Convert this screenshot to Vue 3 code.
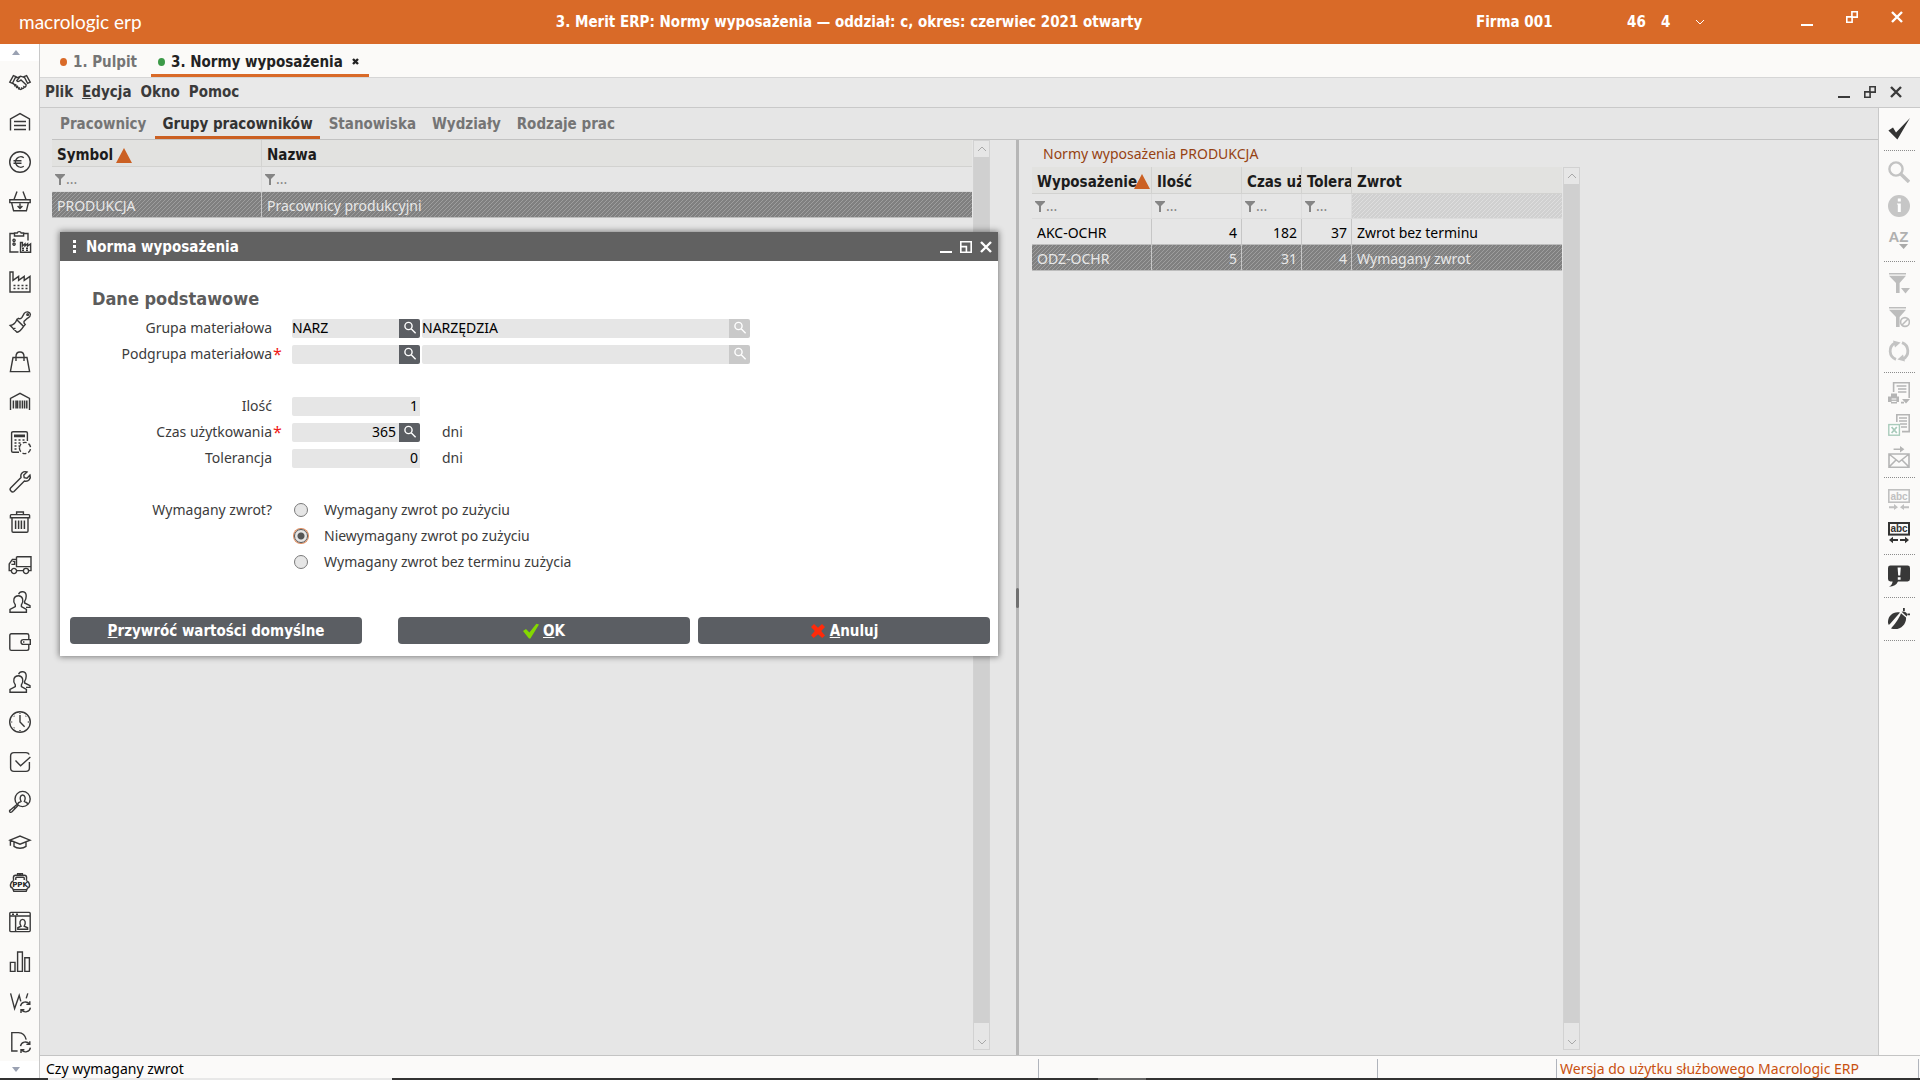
<script setup>
import { ref } from 'vue'

const person = 'M1 21.3V18.4L6.3 15.6V13.8C3.4 10 4.6 4.7 9.3 4.7S15 10 12.4 13.8V15.6L17.4 18.4V21.3Z'
const personBehind = 'M9.6 3.2C11-.4 17.2-.2 17.2 5C17.2 7.5 16.6 9 15.6 10.4V12L21 14.6V16.4H17'
const refreshSmall = 'M11.5 15.2A5 5 0 0 1 20.4 13M20.8 10.2V13.4H17.4M21.4 16.6A5 5 0 0 1 12.6 19M12 22V18.8H15.4'

const modules = [
  { name: 'Kontrahenci', d: 'M.8 11.2 4.4 4.6 6.9 5.6 3.4 12.4ZM21.2 11.2 17.6 4.6 15.1 5.6 18.6 12.4ZM6.6 6.6 9.6 6.2 11.5 5.2 15.2 6.4M11.4 5.4 7.8 9.6C8.6 11 10.4 10.6 12 9L17.4 14M4 12.4 11 18.2C12 18.8 12.8 18 12.8 17.2 14 18 15.4 17 15 15.8 16.2 16.4 17.4 15.4 17 14M5.4 15.4 7.2 13.2M7.2 17 9 14.8M9.2 18.4 10.8 16.4' },
  { name: 'Magazyn', d: 'M1.5 19.5V8L11 2.6 20.5 8V19.5M5 10.5H17M5 14.5H17M5 18.5H17' },
  { name: 'Finanse', d: 'M.7 11a10.3 10.3 0 1 0 20.6 0a10.3 10.3 0 1 0-20.6 0M14.8 6.8A5.2 5.2 0 1 0 14.8 15.2M4.5 9.7H12.5M4.5 12.3H12.5' },
  { name: 'Zakupy', d: 'M.8 8.8H21.2V11.6H.8ZM2.6 11.6 4.6 19.8H17.4L19.4 11.6M5 8.5 8 .5M17 8.5 14 .5M11 12.5V17.4M8.6 15 11 17.4 13.4 15' },
  { name: 'Planowanie', d: 'M5 2.5H1V21H9.5M15 2.5H19V9.5M5.5 2H8.2C8.6.2 11.8.2 12.2 2H14.6V5H5.5ZM5 8.2a1.1 1.1 0 1 0 .1 0M5 12a1.1 1.1 0 1 0 .1 0M11.5 21.3V11.5H13.4V15L16 12.8V15L18.6 12.8V15L21.6 12.8V21.3Z', dots: 'M13 17.2H21M13 19.2H21' },
  { name: 'Produkcja', d: 'M1 21V1H4V9.4L9.6 5.4V9.4L15.2 5.4V9.4L21 5.4V21Z', dots: 'M4.5 14.5H19M4.5 17.5H19' },
  { name: 'Czyszczenie', d: 'M1.2 14.5C4.5 14 6.8 11.5 7.8 8.8L14.6 15.4C12.6 18.5 10.5 21 8 21.3ZM7.8 8.8 9.4 7.4C11 8 12 7.8 13 6.4L15.2 2.4C17 .2 21 .4 21.4 3.4 21.6 6 19.6 6.6 17.8 7.8L15 10.4C14.6 11.6 15.2 12.6 16.2 13.6L14.6 15.4M18.6 2.8a.8.8 0 1 0 .1 0M4 18.6 6.4 17' },
  { name: 'Sprzedaż', d: 'M4 6.5H18L20.6 20.6H1.4ZM7 10V5.6C7-.6 15-.6 15 5.6V10' },
  { name: 'Kody kreskowe', d: 'M1.5 19V7.4L11 2.4 20.5 7.4V19', bars: 'M4.4 9.4V17.6M7 9.4V17.6M8.6 9.4V17.6M11 9.4V17.6M13.4 9.4V17.6M15.6 9.4V17.6M17.8 9.4V17.6' },
  { name: 'Rozliczenia', d: 'M10 21.2H4Q2.6 21.2 2.6 20V2Q2.6.8 4 .8H17Q18.4.8 18.4 2V10', bars: 'M5 4.2H16M5 5.4H16', dots: 'M5.5 9H16M5.5 12H12M5.5 15H10M5.5 18H9', dashed: 'M10.4 17a5.6 5.6 0 1 0 11.2 0a5.6 5.6 0 1 0-11.2 0' },
  { name: 'Serwis', d: 'M21 4 18 7.2 15.2 6.6 14.8 4 18 1C14.4-.4 10.9 2.6 12 6.6L1.6 17C0 18.7 3 22.2 5 20.4L15.4 10C19.5 11 22.3 7.6 21 4Z' },
  { name: 'Likwidacja', d: 'M2.2 3.6H19.8Q20.6 3.6 20.6 4.4V6.8H1.4V4.4Q1.4 3.6 2.2 3.6ZM7.6 3.4V1H14.4V3.4M3 6.8V20Q3 21.2 4.2 21.2H17.8Q19 21.2 19 20V6.8', bars: 'M6.6 9.6V18M9.6 9.6V18M12.4 9.6V18M15.4 9.6V18' },
  { name: 'Transport', d: 'M7.5 5.8H22V19.6H19.4M7.5 5.8V15.6H22M7.5 8.4H3.4L.2 13V19.6H2.2M7.6 19.6H14.4M3.6 10.4H5.6V13.4H2.4M2.4 20a2.6 2.6 0 1 0 5.2 0a2.6 2.6 0 1 0-5.2 0M14.4 20a2.6 2.6 0 1 0 5.2 0a2.6 2.6 0 1 0-5.2 0' },
  { name: 'Kadry', d: person + personBehind },
  { name: 'Portfel', d: 'M19.8 8V4.4Q19.8 2.8 18 2.8H2.4Q.8 2.8.8 4.4V17.8Q.8 19.4 2.4 19.4H18Q19.8 19.4 19.8 17.6V14M21.3 8.6H14.4a2.3 2.3 0 0 0 0 4.8H21.3ZM14 11H15.4' },
  { name: 'Płace', d: person + personBehind },
  { name: 'Czas pracy', d: 'M.7 11a10.3 10.3 0 1 0 20.6 0a10.3 10.3 0 1 0-20.6 0M11 4V11L15.6 15.8M11 2.2V3M11 19V20M2.4 11H3.2M18.8 11H19.8M4.9 4.9 5.4 5.4M17.1 4.9 16.6 5.4M4.9 17.1 5.4 16.6' },
  { name: 'Zadania', d: 'M20.4 11V17Q20.4 20.4 17 20.4H5Q1.6 20.4 1.6 17V5Q1.6 1.6 5 1.6H17Q19.4 1.6 20.2 3.6M6.5 9.6 11.6 14.8 21.4 6' },
  { name: 'Rekrutacja', d: 'M6 8a7.6 7.6 0 1 0 15.2 0a7.6 7.6 0 1 0-15.2 0M8.8 13.4 9.4 11.8 12 10.4C10.4 7.6 11.2 4 13.6 4S17 7.6 15.4 10.4L18 11.8 18.6 13.4M8 13.4 9 14.4 3 20.8Q1.6 22 .8 20.8T1.4 19ZM5 16.6 6 17.8' },
  { name: 'Szkolenia', d: 'M1 9.2 11 5 21 9.2 11 13.2ZM5 11.2V15.4C8 17.8 14 17.8 17 15.4V11.2M1.4 9.6V14.8' },
  { name: 'PPK', d: 'M4.6 9.6 4.4 6.6Q4.4 4.2 6.6 4.2H15.4Q17.6 4.2 17.6 6.6L17.4 9.6M6.8 9V7Q6.8 6.2 7.6 6.2H14.4Q15.2 6.2 15.2 7V9M8.6 4V2.6H10.6V4M11.4 4V2.6H13.4V4M4.6 9.6C1 11.2.2 16 3.6 17.2L4.8 20.4H17.2L18.4 17.2C21.8 16 21 11.2 17.4 9.6M4.8 18.6H17.2', label: 'PPK' },
  { name: 'Portal pracownika', d: 'M1.8 1.4H20.2Q21.2 1.4 21.2 2.4V19.6Q21.2 20.6 20.2 20.6H1.8Q.8 20.6.8 19.6V2.4Q.8 1.4 1.8 1.4ZM.8 5H21.2M6.6 5V20.6M8.8 18.2V16.8L12 15.2C10 12.2 11 8.4 13.6 8.4S17.2 12.2 15.2 15.2L18.6 16.8V18.2Z', dots: 'M3 3.2H9' },
  { name: 'Analizy', d: 'M1.4 11.4H6V20.4H1.4ZM8.6 1H13.4V20.4H8.6ZM15.8 6.8H20.4V20.4H15.8Z' },
  { name: 'Aktualizacja W', d: 'M1.6 2.4 5.6 17.6 10.2 4.4 11.8 10.4M18.8 2.4 17.2 7.4' + refreshSmall },
  { name: 'Aktualizacja D', d: 'M8.6 20H2.8V1.6H9.4C14.6 1.8 16.4 5 17.2 8.6' + refreshSmall }
]

const tools = [
  { items: ['check'] },
  { items: ['search', 'info', 'sort'] },
  { items: ['filter', 'filter-off', 'refresh'] },
  { items: ['print', 'excel', 'mail'], tight: true },
  { items: ['narrow', 'widen'] },
  { items: ['alert'] },
  { items: ['bug'] }
]

const menu = ['Plik', 'Edycja', 'Okno', 'Pomoc']
const views = ['Pracownicy', 'Grupy pracowników', 'Stanowiska', 'Wydziały', 'Rodzaje prac']
const activeView = ref('Grupy pracowników')

const norms = [
  { symbol: 'AKC-OCHR', qty: 4, time: 182, tolerance: 37, back: 'Zwrot bez terminu' },
  { symbol: 'ODZ-OCHR', qty: 5, time: 31, tolerance: 4, back: 'Wymagany zwrot', selected: true }
]

const returnOptions = ['Wymagany zwrot po zużyciu', 'Niewymagany zwrot po zużyciu', 'Wymagany zwrot bez terminu zużycia']
const returnMode = ref(returnOptions[1])
const group = ref('NARZ')
const groupName = ref('NARZĘDZIA')
const subgroup = ref('')
const subgroupName = ref('')
const quantity = ref('1')
const usage = ref('365')
const tolerance = ref('0')
</script>

<template>
  <div class="app">
    <header class="topbar">
      <span class="brand">macrologic erp</span>
      <h1 class="title">3. Merit ERP: Normy wyposażenia — oddział: c, okres: czerwiec 2021 otwarty</h1>
      <div class="account">
        <span class="company">Firma 001</span>
        <span class="count">46</span>
        <span class="count">4</span>
        <button class="plain" aria-label="Rozwiń"><svg width="10" height="6" viewBox="0 0 10 6" class="line"><path d="M1 1 5 5 9 1" /></svg></button>
      </div>
      <div class="win-buttons">
        <button class="plain low" aria-label="Minimalizuj"><svg width="12" height="12" viewBox="0 0 12 12"><path d="M0 10h12v2H0z" fill="currentColor" /></svg></button>
        <button class="plain" aria-label="Przywróć"><svg width="12" height="12" viewBox="0 0 12 12" class="line bold"><path d="M5.9.8H11.2V6.1H5.9ZM.8 5.9H6.1V11.2H.8Z" /></svg></button>
        <button class="plain" aria-label="Zamknij"><svg width="12" height="12" viewBox="0 0 12 12" class="line heavy"><path d="M1 1 11 11M11 1 1 11" /></svg></button>
      </div>
    </header>

    <div class="body">
      <nav class="modules" aria-label="Moduły">
        <button class="plain scroll-step" aria-label="W górę"><svg width="8" height="5" viewBox="0 0 8 5"><path d="M4 0 8 5H0Z" fill="#9aa1b2" /></svg></button>
        <button v-for="m in modules" :key="m.name" class="plain module" :aria-label="m.name">
          <svg width="24" height="22" viewBox="-1 0 24 22" class="mod-icon">
            <path :d="m.d" />
            <path v-if="m.bars" :d="m.bars" class="bars" />
            <path v-if="m.dots" :d="m.dots" class="dots" />
            <path v-if="m.dashed" :d="m.dashed" class="dashed" />
            <text v-if="m.label" x="11" y="16.4" text-anchor="middle" class="mod-label">{{ m.label }}</text>
          </svg>
        </button>
        <button class="plain scroll-step" aria-label="W dół"><svg width="8" height="5" viewBox="0 0 8 5"><path d="M0 0H8L4 5Z" fill="#9aa1b2" /></svg></button>
      </nav>

      <main class="main">
        <div class="doc-tabs">
          <button class="plain doc-tab"><i class="dot orange"></i>1. Pulpit</button>
          <button class="plain doc-tab active"><i class="dot green"></i>3. Normy wyposażenia
            <svg width="7" height="7" viewBox="0 0 7 7" class="line heavy tab-close"><path d="M1 1 6 6M6 1 1 6" /></svg>
          </button>
        </div>

        <div class="menubar">
          <button v-for="item in menu" :key="item" class="plain menu-item"><template v-if="item === 'Edycja'"><u>E</u>dycja</template><template v-else>{{ item }}</template></button>
          <div class="win-buttons dark">
            <button class="plain" aria-label="Minimalizuj okno"><svg width="12" height="12" viewBox="0 0 12 12"><path d="M0 10h12v2H0z" fill="currentColor" /></svg></button>
            <button class="plain" aria-label="Przywróć okno"><svg width="12" height="12" viewBox="0 0 12 12" class="line bold"><path d="M5.9.8H11.2V6.1H5.9ZM.8 5.9H6.1V11.2H.8Z" /></svg></button>
            <button class="plain" aria-label="Zamknij okno"><svg width="12" height="12" viewBox="0 0 12 12" class="line heavy"><path d="M1 1 11 11M11 1 1 11" /></svg></button>
          </div>
        </div>

        <div class="work">
          <div class="content">
            <div class="views">
              <button v-for="v in views" :key="v" class="plain view" :class="{ active: v === activeView }" @click="activeView = v">{{ v }}</button>
            </div>

            <div class="panes">
              <section class="pane left">
                <table class="grid groups">
                  <colgroup><col class="c-symbol" /><col /></colgroup>
                  <thead>
                    <tr>
                      <th>Symbol<svg width="16" height="15" viewBox="0 0 16 15" class="sort-mark"><path d="M8 0 16 15H0Z" fill="#cb6023" /></svg></th>
                      <th>Nazwa</th>
                    </tr>
                    <tr class="filters">
                      <td v-for="n in 2" :key="n"><button class="plain filter" aria-label="Filtruj"><svg width="10" height="11" viewBox="0 0 10 11"><path d="M0 0H10V1L6 5V11H4V5L0 1Z" fill="#858585" /></svg>...</button></td>
                    </tr>
                  </thead>
                  <tbody>
                    <tr class="selected"><td>PRODUKCJA</td><td>Pracownicy produkcyjni</td></tr>
                  </tbody>
                </table>
                <div class="scrollbar">
                  <button class="plain up" aria-label="Przewiń w górę"><svg width="10" height="6" viewBox="0 0 10 6" class="line"><path d="M1 5 5 1 9 5" /></svg></button>
                  <div class="thumb"></div>
                  <button class="plain down" aria-label="Przewiń w dół"><svg width="10" height="6" viewBox="0 0 10 6" class="line"><path d="M1 1 5 5 9 1" /></svg></button>
                </div>
              </section>

              <div class="splitter"><span class="grip"></span></div>

              <section class="pane right">
                <h2 class="caption">Normy wyposażenia PRODUKCJA</h2>
                <div class="grid-wrap">
                  <table class="grid norms">
                    <colgroup><col class="c-item" /><col class="c-qty" /><col class="c-time" /><col class="c-tol" /><col /></colgroup>
                    <thead>
                      <tr>
                        <th>Wyposażenie<svg width="16" height="15" viewBox="0 0 16 15" class="sort-mark over"><path d="M8 0 16 15H0Z" fill="#cb6023" /></svg></th>
                        <th>Ilość</th><th>Czas uż</th><th>Tolera</th><th>Zwrot</th>
                      </tr>
                      <tr class="filters">
                        <td v-for="n in 4" :key="n"><button class="plain filter" aria-label="Filtruj"><svg width="10" height="11" viewBox="0 0 10 11"><path d="M0 0H10V1L6 5V11H4V5L0 1Z" fill="#858585" /></svg>...</button></td>
                        <td class="hatched"></td>
                      </tr>
                    </thead>
                    <tbody>
                      <tr v-for="r in norms" :key="r.symbol" :class="{ selected: r.selected }">
                        <td>{{ r.symbol }}</td>
                        <td class="num">{{ r.qty }}</td>
                        <td class="num">{{ r.time }}</td>
                        <td class="num">{{ r.tolerance }}</td>
                        <td>{{ r.back }}</td>
                      </tr>
                    </tbody>
                  </table>
                  <div class="scrollbar">
                    <button class="plain up" aria-label="Przewiń w górę"><svg width="10" height="6" viewBox="0 0 10 6" class="line"><path d="M1 5 5 1 9 5" /></svg></button>
                    <div class="thumb"></div>
                    <button class="plain down" aria-label="Przewiń w dół"><svg width="10" height="6" viewBox="0 0 10 6" class="line"><path d="M1 1 5 5 9 1" /></svg></button>
                  </div>
                </div>
              </section>
            </div>

            <form class="dialog" role="dialog" aria-labelledby="dialog-title" @submit.prevent>
              <div class="dialog-bar">
                <svg width="3" height="13" viewBox="0 0 3 13"><path d="M0 0h3v3H0zM0 5h3v3H0zM0 10h3v3H0z" fill="#fff" /></svg>
                <h2 id="dialog-title">Norma wyposażenia</h2>
                <div class="dialog-tools">
                  <button type="button" class="plain" aria-label="Zwiń"><svg width="12" height="12" viewBox="0 0 12 12"><path d="M0 10h12v2H0z" fill="currentColor" /></svg></button>
                  <button type="button" class="plain" aria-label="Powiększ"><svg width="12" height="12" viewBox="0 0 12 12" class="line bold"><path d="M.8.8H11.2V11.2H.8ZM1 5.6H6.4V11" /></svg></button>
                  <button type="button" class="plain" aria-label="Zamknij dialog"><svg width="12" height="12" viewBox="0 0 12 12" class="line heavy"><path d="M1 1 11 11M11 1 1 11" /></svg></button>
                </div>
              </div>

              <div class="dialog-body">
                <h3>Dane podstawowe</h3>

                <div class="field">
                  <label for="group">Grupa materiałowa</label><span class="req"></span>
                  <input id="group" v-model="group" class="code" /><button type="button" class="plain lookup" aria-label="Wybierz grupę"><svg width="14" height="14" viewBox="0 0 14 14"><circle cx="5.5" cy="5" r="3.6" /><path d="M8.2 7.8 12.6 12.2" /></svg></button>
                  <input v-model="groupName" class="name" aria-label="Nazwa grupy" readonly /><button type="button" class="plain lookup off" disabled aria-label="Wybierz nazwę grupy"><svg width="14" height="14" viewBox="0 0 14 14"><circle cx="5.5" cy="5" r="3.6" /><path d="M8.2 7.8 12.6 12.2" /></svg></button>
                </div>
                <div class="field">
                  <label for="subgroup">Podgrupa materiałowa</label><span class="req">*</span>
                  <input id="subgroup" v-model="subgroup" class="code" /><button type="button" class="plain lookup" aria-label="Wybierz podgrupę"><svg width="14" height="14" viewBox="0 0 14 14"><circle cx="5.5" cy="5" r="3.6" /><path d="M8.2 7.8 12.6 12.2" /></svg></button>
                  <input v-model="subgroupName" class="name" aria-label="Nazwa podgrupy" readonly /><button type="button" class="plain lookup off" disabled aria-label="Wybierz nazwę podgrupy"><svg width="14" height="14" viewBox="0 0 14 14"><circle cx="5.5" cy="5" r="3.6" /><path d="M8.2 7.8 12.6 12.2" /></svg></button>
                </div>

                <div class="field spaced">
                  <label for="quantity">Ilość</label><span class="req"></span>
                  <input id="quantity" v-model="quantity" class="number" />
                </div>
                <div class="field">
                  <label for="usage">Czas użytkowania</label><span class="req">*</span>
                  <input id="usage" v-model="usage" class="code number-code" /><button type="button" class="plain lookup" aria-label="Wybierz czas"><svg width="14" height="14" viewBox="0 0 14 14"><circle cx="5.5" cy="5" r="3.6" /><path d="M8.2 7.8 12.6 12.2" /></svg></button>
                  <span class="unit">dni</span>
                </div>
                <div class="field">
                  <label for="tolerance">Tolerancja</label><span class="req"></span>
                  <input id="tolerance" v-model="tolerance" class="number" />
                  <span class="unit">dni</span>
                </div>

                <div class="field choices spaced" role="radiogroup" aria-labelledby="return-label">
                  <span id="return-label" class="label">Wymagany zwrot?</span><span class="req"></span>
                  <div class="options">
                    <label v-for="o in returnOptions" :key="o" class="option">
                      <input v-model="returnMode" type="radio" name="return" :value="o" />{{ o }}
                    </label>
                  </div>
                </div>
              </div>

              <div class="dialog-actions">
                <button type="button" class="action reset"><span><u>P</u>rzywróć wartości domyślne</span></button>
                <button type="submit" class="action"><svg width="16" height="16" viewBox="0 0 16 16"><path d="M0 8 3 6 6.4 9.4 13.4.8 16 1.4 7.4 15.4 6 15.4Z" fill="#84d800" /></svg><span><u>O</u>K</span></button>
                <button type="button" class="action"><svg width="16" height="16" viewBox="0 0 16 16"><path d="M1 4 4 1 8 4.8 12 1 15 4 11.2 8 15 12.4 12.2 15 8 11.2 3.6 15 1 12.2 4.8 8Z" fill="#ff2a0a" /></svg><span><u>A</u>nuluj</span></button>
              </div>
            </form>
          </div>

          <aside class="toolbar" aria-label="Narzędzia">
            <div v-for="(g, i) in tools" :key="i" class="tool-group" :class="{ tight: g.tight }">
              <button v-for="t in g.items" :key="t" class="plain tool" :aria-label="t">
                <svg width="22" height="22" viewBox="0 0 22 22">
                  <path v-if="t === 'check'" d="M.4 12.6 5 9.6 8 14.4 22 0 9.4 21.4Z" fill="#333" />
                  <g v-else-if="t === 'search'" fill="none" stroke="#c3c3c3"><circle cx="8" cy="8" r="6.6" stroke-width="2.4" /><path d="M12.8 13 21 21" stroke-width="3.4" /></g>
                  <g v-else-if="t === 'info'"><circle cx="11" cy="11" r="11" fill="#c6c6c6" /><path d="M9.8 3.6h3v2.8h-3zM9 8.4h3.8V17H9.8V9.6H9z" fill="#fff" /></g>
                  <g v-else-if="t === 'sort'"><text x="10.5" y="13" text-anchor="middle" class="glyph az">AZ</text><path d="M11 15H20L15.6 20Z" fill="#aaa" /></g>
                  <g v-else-if="t === 'filter'" fill="#bdbdbd"><path d="M1 1H18V2.4H1ZM1 3.8H18L11.6 11V21H8V11ZM13 16H22L17.5 21.4Z" /></g>
                  <g v-else-if="t === 'filter-off'"><path d="M1 1H18V2.4H1ZM1 3.8H18L11.6 11V21H8V11Z" fill="#bdbdbd" /><circle cx="17" cy="16" r="4.4" fill="#fbfaf9" stroke="#bdbdbd" stroke-width="1.6" /><path d="M14 19 20 13" stroke="#bdbdbd" stroke-width="1.6" /></g>
                  <g v-else-if="t === 'refresh'"><path d="M8 19.4A9 9 0 0 1 7 3M14 2.6A9 9 0 0 1 15 19" fill="none" stroke="#c3c3c3" stroke-width="2.8" /><path d="M5 .6 12.6 2.6 7 7.6ZM17 21.4 9.4 19.4 15 14.4Z" fill="#c3c3c3" /></g>
                  <g v-else-if="t === 'print'"><path d="M5.6 10V.8H21.2V16M8.6 4H18.4M10 7H18.4M10 10H18.4M13 20.6H16" fill="none" stroke="#b5b5b5" stroke-width="1.6" /><path d="M3 11.4H9V14.4H11V20H9V21.6H3V20H0V14.4H3ZM14 17H22L18 21.4Z" fill="#b5b5b5" /><path d="M3.6 17H8.4M3.6 19.4H8.4" stroke="#fff" /></g>
                  <g v-else-if="t === 'excel'"><path d="M8.8 8V.8H21.2V17.6H14M11 4H19M11 7H19M12 10H19M13 13H19" fill="none" stroke="#b5b5b5" stroke-width="1.6" /><rect x=".8" y="10.6" width="10.6" height="10.6" fill="#fff" stroke="#a9cbbb" stroke-width="1.4" /><path d="M3.6 13 8.8 19M8.8 13 3.6 19" stroke="#a9cbbb" stroke-width="1.8" /></g>
                  <g v-else-if="t === 'mail'" fill="none" stroke="#b5b5b5" stroke-width="1.6"><path d="M1 8H21V21.2H1ZM1 8 11 16 21 8M1 21 8 14M21 21 14 14M5.6 3.2H13" /><path d="M12 0 16.4 3.2 12 6.4Z" fill="#b5b5b5" stroke="none" /></g>
                  <g v-else-if="t === 'narrow'"><rect x=".8" y="1.8" width="20.4" height="12.4" fill="none" stroke="#c0c0c0" stroke-width="1.6" /><text x="11" y="11.6" text-anchor="middle" class="glyph abc" fill="#c0c0c0">abc</text><path d="M1 18.2H6V16L10 19.2 6 22V20.2H1ZM21 18.2H16V16L12 19.2 16 22V20.2H21Z" fill="#c0c0c0" /></g>
                  <g v-else-if="t === 'widen'"><rect x="1" y="1" width="20" height="11.6" fill="none" stroke="#333" stroke-width="2" /><text x="11" y="10.4" text-anchor="middle" class="glyph abc" fill="#333">abc</text><path d="M10 17H5V14.8L1 18 5 21.2V19H10ZM12 17H17V14.8L21 18 17 21.2V19H12Z" fill="#333" /></g>
                  <g v-else-if="t === 'alert'"><path d="M2.4.6H19.6Q22 .6 22 3V14Q22 16.4 19.6 16.4H10Q8 21 1 21.8 4.4 19.8 4.6 16.4H2.4Q0 16.4 0 14V3Q0 .6 2.4.6Z" fill="#383838" /><path d="M9.6 2.6H12.8L12.2 10.6H10.2ZM9.8 12.2H12.6V14.8H9.8Z" fill="#fff" /></g>
                  <g v-else fill="#383838"><path d="M0 15C-.4 8 5 3 12 4.4L2.4 15.6.8 17ZM3 20.4C6 17 11 11 13 5.2L18 9.4C18.8 16 12 23.4 3 20.4ZM13.6 3.8Q16 2.8 18 4.6T18.6 8.4ZM15 0H16.8V3H15ZM19.4 5.6H22V7.2H19.4Z" /></g>
                </svg>
              </button>
            </div>
          </aside>
        </div>

        <footer class="status">
          <span class="cell hint">Czy wymagany zwrot</span>
          <span class="cell mid"></span>
          <span class="cell short"></span>
          <span class="cell license">Wersja do użytku służbowego Macrologic ERP</span>
        </footer>
      </main>
    </div>
    <div class="taskbar-edge"></div>
  </div>
</template>

<style>
body {
  margin: 0;
}
</style>

<style scoped>
.app {
  display: flex;
  flex-direction: column;
  min-height: 100vh;
  background: #e6e6e6;
  color: #000;
  font: 14px/20px "Noto Sans", sans-serif;
}
.app *,
.app *::before {
  box-sizing: border-box;
}
svg {
  display: block;
  flex: none;
}
h1, h2, h3 {
  margin: 0;
  font-size: inherit;
}
.plain {
  display: flex;
  align-items: center;
  margin: 0;
  padding: 0;
  border: 0;
  background: none;
  color: inherit;
  font: inherit;
  white-space: nowrap;
}
.line {
  fill: none;
  stroke: currentColor;
  stroke-width: 1;
}
.line.bold {
  stroke-width: 1.6;
}
.line.heavy {
  stroke-width: 2.4;
}
.topbar,
.doc-tab,
.menubar,
.view,
.grid th,
.dialog-bar,
.action {
  font: bold 15px/20px "DejaVu Sans Condensed", "Noto Sans", sans-serif;
}

/* Top bar */
.topbar {
  display: grid;
  grid-template-columns: 19px 421px 1fr 305px 122px;
  align-items: center;
  height: 44px;
  padding-right: 17px;
  background: #d96a28;
  color: #fff;
}
.brand {
  grid-column: 2;
  font: 19px/20px Lato, sans-serif;
}
.title {
  padding-right: 218px;
  text-align: center;
  white-space: nowrap;
}
.account {
  display: flex;
  align-items: center;
}
.company {
  width: 151px;
}
.count {
  width: 34px;
}
.win-buttons {
  display: flex;
  justify-content: space-between;
  width: 102px;
  justify-self: end;
  padding-bottom: 10px;
}
.win-buttons .low {
  padding-top: 5px;
}

/* Module strip */
.body {
  display: flex;
  flex: 1;
}
.modules {
  display: flex;
  flex-direction: column;
  flex: 0 0 40px;
  border-right: 1px solid #c8c8c8;
  background: #fbfaf8;
}
.scroll-step {
  justify-content: center;
  height: 17px;
  padding-right: 8px;
  background: #fff;
}
.module {
  justify-content: center;
  height: 40px;
  padding-top: 2px;
}
.mod-icon {
  fill: none;
  stroke: #383838;
  stroke-width: 1.4;
  overflow: visible;
}
.mod-icon .bars {
  stroke-width: 1.5;
}
.mod-icon .dots {
  stroke-dasharray: 2 2;
}
.mod-icon .dashed {
  fill: #fbfaf8;
  stroke-dasharray: 4 2;
}
.mod-label {
  fill: #222;
  stroke: none;
  font: bold 7px "DejaVu Sans", sans-serif;
}

/* Document tabs and menu */
.main {
  display: flex;
  flex-direction: column;
  flex: 1;
  min-width: 0;
}
.doc-tabs {
  display: flex;
  gap: 7px;
  height: 34px;
  padding-left: 13px;
  border-bottom: 1px solid #d6d6d6;
  background: #fbfaf8;
}
.doc-tab {
  gap: 6px;
  padding: 5px 7px 0;
  border-bottom: 3px solid transparent;
  color: #757575;
}
.doc-tab.active {
  padding-right: 10px;
  border-color: #d96a28;
  color: #222;
}
.tab-close {
  margin-left: 3px;
}
.dot {
  width: 7px;
  height: 8px;
  border-radius: 50%;
}
.orange {
  background: #d96a28;
}
.green {
  background: #3c9a48;
}
.menubar {
  display: flex;
  align-items: center;
  gap: 9px;
  height: 30px;
  padding: 0 18px 2px 5px;
  border-bottom: 1px solid #c9c9c9;
  background: #e9e9e9;
  color: #3a3a3a;
}
.win-buttons.dark {
  width: 64px;
  margin-left: auto;
  padding: 0;
}

/* Work area */
.work {
  display: flex;
  flex: 1;
}
.content {
  position: relative;
  display: flex;
  flex-direction: column;
  flex: 1;
  min-width: 0;
}
.views {
  display: flex;
  gap: 2px;
  height: 32px;
  margin-left: 12px;
  padding-left: 1px;
  border-bottom: 1px solid #c2c2c2;
}
.view {
  padding: 4px 7px 0;
  border-bottom: 3px solid transparent;
  color: #757575;
}
.view.active {
  border-color: #cb6023;
  color: #333;
}
.panes {
  display: grid;
  grid-template-columns: 976fr 3px 859fr;
  flex: 1;
}
.pane.left {
  display: flex;
  gap: 1px;
  padding: 0 26px 5px 12px;
}
.pane.right {
  display: flex;
  flex-direction: column;
  padding: 4px 13px 5px;
}
.splitter {
  position: relative;
  background: #b6b6b6;
}
.grip {
  position: absolute;
  top: 49%;
  left: 0;
  width: 3px;
  height: 20px;
  border-radius: 2px;
  background: #707070;
}
.caption {
  height: 23px;
  padding-left: 11px;
  color: #964212;
  font-weight: normal;
}
.grid-wrap {
  display: flex;
  flex: 1;
  gap: 1px;
}
.grid {
  align-self: flex-start;
  table-layout: fixed;
  border-collapse: separate;
  border-spacing: 0;
}
.grid.groups {
  flex: 1;
  width: 100%;
}
.grid.norms {
  width: 530px;
}
.c-symbol { width: 210px; }
.c-item { width: 120px; }
.c-qty { width: 90px; }
.c-time { width: 60px; }
.c-tol { width: 50px; }
.grid th,
.grid td {
  position: relative;
  height: 26px;
  padding: 2px 4px 0 5px;
  overflow: hidden;
  border-right: 1px solid #c6c6c6;
  border-bottom: 1px solid #bdbdbd;
  text-align: left;
  white-space: nowrap;
}
.grid th {
  height: 27px;
  padding: 4px 0 0 5px;
  border-color: #d2d2d0;
  background: #e2e2e0;
  color: #1c1c1c;
}
.grid th:last-child,
.grid td:last-child {
  border-right: 0;
}
.grid .filters td {
  height: 25px;
  padding: 0 3px;
  border-color: #dcdcdc;
}
.grid .num {
  padding-left: 0;
  text-align: right;
}
.filter {
  gap: 1px;
  height: 18px;
  color: #858585;
}
.sort-mark {
  display: inline-block;
  margin-left: 3px;
  vertical-align: -3px;
}
.sort-mark.over {
  position: absolute;
  top: 7px;
  right: 1px;
}
.hatched {
  background: linear-gradient(135deg, #dedede 19%, #d0d0d0 19% 56%, #dedede 56% 69%, #d0d0d0 69%) 0 0 / 4px 4px;
}
.selected td {
  background: linear-gradient(135deg, #9e9e9e 19%, #808080 19% 56%, #9e9e9e 56% 69%, #808080 69%) 0 0 / 4px 4px;
  color: #e8e8e8;
}
.scrollbar {
  display: flex;
  flex-direction: column;
  flex: 0 0 17px;
  border: 1px solid #d2d2d2;
  color: #a8a8a8;
}
.scrollbar .plain {
  justify-content: center;
}
.scrollbar .up {
  height: 16px;
}
.scrollbar .down {
  height: 26px;
  padding-top: 12px;
}
.thumb {
  flex: 1;
  background: #d0d0d0;
}

/* Dialog */
.dialog {
  position: absolute;
  top: 124px;
  left: 20px;
  width: 938px;
  background: #fff;
  box-shadow: 0 0 6px 1px rgba(0, 0, 0, .45);
  color: #3c3c3c;
}
.dialog-bar {
  display: flex;
  align-items: center;
  gap: 10px;
  height: 29px;
  padding: 0 6px 0 13px;
  background: #616161;
  color: #fff;
}
.dialog-tools {
  display: flex;
  gap: 8px;
  margin-left: auto;
}
.dialog-body {
  padding: 26px 33px 38px 32px;
}
.dialog-body h3 {
  height: 28px;
  color: #5c5c5c;
  font: bold 18px/24px "DejaVu Sans Condensed", "Noto Sans", sans-serif;
}
.field {
  display: flex;
  align-items: center;
  height: 26px;
}
.field > label,
.field > .label {
  flex: 0 0 180px;
  text-align: right;
}
.field.spaced {
  margin-top: 26px;
}
.req {
  flex: 0 0 20px;
  padding-left: 1px;
  color: #f01818;
  font-size: 16px;
}
.field input:not([type="radio"]) {
  height: 19px;
  margin: 0;
  padding: 0;
  border: 0;
  border-radius: 2px 0 0 2px;
  outline: 0;
  background: #e6e6e6;
  color: #000;
  font: inherit;
}
.field .code {
  width: 107px;
}
.field .name {
  width: 307px;
  margin-left: 2px !important;
}
.field .number {
  width: 128px;
  padding-right: 2px !important;
  text-align: right;
}
.field .number-code {
  padding-right: 3px !important;
  text-align: right;
}
.lookup {
  justify-content: center;
  width: 21px;
  height: 19px;
  border-radius: 0 2px 2px 0;
  background: #5b5e63;
}
.lookup.off {
  background: #c9c9c9;
}
.lookup svg {
  fill: none;
  stroke: #fff;
  stroke-width: 1.4;
}
.unit {
  padding-left: 22px;
}
.field.choices {
  align-items: flex-start;
  height: 78px;
  line-height: 26px;
}
.option {
  display: flex;
  align-items: center;
  gap: 16px;
  height: 26px;
}
.option input {
  appearance: none;
  width: 14px;
  height: 14px;
  margin: 0 0 0 2px;
  border: 1px solid #7a7a7a;
  border-radius: 50%;
  background: #e6e6e6;
}
.option input:checked {
  border-color: #555;
  background: radial-gradient(circle, #555 0 3px, #e6e6e6 4px);
  box-shadow: 0 0 0 1px #dd8a5c;
}
.dialog-actions {
  display: flex;
  gap: 8px;
  padding: 4px 8px 12px 10px;
}
.action {
  display: flex;
  align-items: center;
  justify-content: center;
  gap: 4px;
  flex: 1;
  height: 27px;
  padding: 0;
  border: 0;
  border-radius: 4px;
  background: #5b5e63;
  color: #fff;
}
.action.reset {
  margin-right: 28px;
}

/* Right toolbar */
.toolbar {
  flex: 0 0 42px;
  border-left: 1px solid #c9c9c9;
  background: #fbfaf9;
}
.tool-group {
  margin: 0 5px;
  padding: 4px 0;
  border-bottom: 1px dotted #8c8c8c;
}
.tool {
  justify-content: center;
  width: 100%;
  height: 34px;
  padding-right: 2px;
}
.tight .tool {
  height: 32px;
}
.glyph {
  font-family: "Liberation Sans", sans-serif;
  font-weight: bold;
}
.az {
  fill: #b0b0b0;
  font-size: 15px;
}
.abc {
  font-size: 10px;
}

/* Status bar */
.status {
  display: flex;
  height: 23px;
  padding-top: 3px;
  border-top: 1px solid #c4c4c4;
  background: #fbfaf9;
}
.cell {
  border-right: 1px solid #b0b4bc;
  white-space: nowrap;
}
.hint {
  flex: 1;
  padding-left: 6px;
}
.mid {
  flex: 0 0 339px;
}
.short {
  flex: 0 0 179px;
}
.license {
  flex: 0 0 362px;
  margin-right: 1px;
  padding-left: 3px;
  color: #c9500f;
}
.taskbar-edge {
  height: 2px;
  background: linear-gradient(90deg, #333 48px, #e8e8e8 48px 392px, #333 392px 1098px, #666 1098px 1146px, #333 1146px);
}
</style>
